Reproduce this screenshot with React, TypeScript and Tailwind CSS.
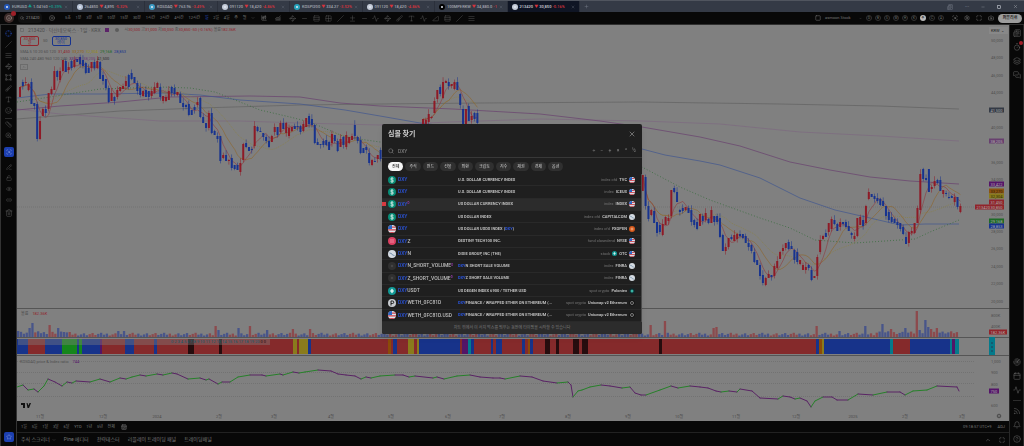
import { Fragment } from 'react';
import {
  AlignJustify, Bell, Brush, Calendar, Camera, ChartCandlestick, ChevronDown, ChevronUp, CirclePlus,
  CircleHelp, Crosshair, Diff, Layers, Link2, LockOpen, Maximize, MessagesSquare, Minus, Newspaper, PencilLine,
  Plus, Radar, Rss, Ruler, ScanSearch, Search, Settings, Slash, Smile, Square, Star, Timer, Trash2, Type,
  VectorSquare, Waypoints, X, ZoomIn, Eye, CalendarRange, ChartNoAxesCombined, TriangleRight, Rows3, Grid2x2, Activity,
} from 'lucide-react';

const RED = '#8e1a26';
const BLUE = '#17338f';
const STEP = 2.862;

const tabs = [
  { symbol: 'EURUSD', price: '1.04160', change: '+0.39%', up: true, color: 'bg-[#2457b8]' },
  { symbol: '264850', price: '4,895', change: '-5.32%', color: 'bg-[#b8c4d8]' },
  { symbol: 'KOSDAQ', price: '763.96', change: '-3.49%', color: 'bg-[#3d9bc4]' },
  { symbol: '091120', price: '18,420', change: '-4.86%', color: 'bg-[#c4cbd8]' },
  { symbol: 'KOSPI200', price: '334.27', change: '-3.52%', color: 'bg-[#27a3bd]' },
  { symbol: '091120', price: '18,420', change: '-4.86%', color: 'bg-[#c4cbd8]' },
  { symbol: '100MPERKW', price: '34,880.0', change: '-1', color: 'bg-black' },
  { symbol: '213420', price: '30,850', change: '-0.16%', color: 'bg-[#c4cbd8]', active: true },
];

const intervals = ['5초', '1분', '3분', '5분', '10분', '15분', '30분', '1시간', '2시간', '4시간', '12시간', '일', '2일', '4일', '주', '월'];

const drawTools = [Waypoints, Minus, Rows3, Grid2x2, Slash, Diff, Minus, Activity, Waypoints, Brush, Type, Activity, TriangleRight, Rows3, Slash, AlignJustify];

const chips = ['전체', '주식', '펀드', '선물', '외환', '크립토', '지수', '채권', '경제', '옵션'];

type Result = {
  symbol: string;
  name: string;
  kind: string;
  exchange: string;
  icon: string;
  flag: string;
  dot?: boolean;
};

const results: Result[] = [
  { symbol: 'DXY', name: 'U.S. DOLLAR CURRENCY INDEX', kind: 'index cfd', exchange: 'TVC', icon: 'dollar', flag: 'us' },
  { symbol: 'DXY', name: 'U.S. DOLLAR CURRENCY INDEX', kind: 'index', exchange: 'ICEUS', icon: 'dollar', flag: 'us' },
  { symbol: 'DXY', name: 'US DOLLAR CURRENCY INDEX', kind: 'index', exchange: 'INDEX', icon: 'dollar', flag: 'us', dot: true },
  { symbol: 'DXY', name: 'US DOLLAR INDEX', kind: 'index cfd', exchange: 'CAPITALCOM', icon: 'dollar', flag: 'white' },
  { symbol: 'DXY', name: 'US DOLLAR USDX INDEX (DXY)', kind: 'index cfd', exchange: 'FXOPEN', icon: 'us', flag: 'orange' },
  { symbol: 'DXYZ', name: 'DESTINY TECH100 INC.', kind: 'fund closedend', exchange: 'NYSE', icon: 'pink', flag: 'us' },
  { symbol: 'DXYN', name: 'DIXIE GROUP, INC (THE)', kind: 'stock', exchange: 'OTC', icon: 'white', flag: 'us' },
  { symbol: 'DXYN_SHORT_VOLUME', name: 'DXYN SHORT SALE VOLUME', kind: 'index', exchange: 'FINRA', icon: 'dark', flag: 'white', dot: true },
  { symbol: 'DXYZ_SHORT_VOLUME', name: 'DXYZ SHORT SALE VOLUME', kind: 'index', exchange: 'FINRA', icon: 'dark', flag: 'white', dot: true },
  { symbol: 'DXYUSDT', name: 'US DEGEN INDEX 6900 / TETHER USD', kind: 'spot crypto', exchange: 'Poloniex', icon: 'tether', flag: 'poloniex' },
  { symbol: 'DXYWETH_0FC81D', name: 'DXYFINANCE / WRAPPED ETHER ON ETHEREUM (...', kind: 'spot crypto', exchange: 'Uniswap v2 Ethereum', icon: 'letter', flag: 'uniswap' },
  { symbol: 'DXYWETH_0FC81D.USD', name: 'DXYFINANCE / WRAPPED ETHER ON ETHEREUM (...', kind: 'spot crypto', exchange: 'Uniswap v2 Ethereum', icon: 'us', flag: 'uniswap' },
];

// r = rising, b = falling, then body top-bottom
const candleGroups = [
  {
    x: 20,
    data: 'r87-97 b82-86 r82-83 r84-90 b82-104 b103-106 b104-139 r121-139 r109-116 b109-113 r93-109 r89-94 r71-90 b71-77 r71-80 r60-71 b61-72 r67-70 b61-68 r60-67 b59-62 b57-64 b60-66 b63-73 b68-73 r62-68 b62-68 r61-68 b62-79 b75-81 b79-88 b88-102 r93-101 b97-101 r90-97 r87-91 r86-89 r81-86 b75-87 b73-79 b77-83 b83-91 b88-95 r91-96 b90-97 b91-97 r91-96 r87-93 r83-88 b87-97 r96-101 r97-101 r91-100 b87-93 b88-94 r92-95 b94-103 b103-107 b105-107 b104-115 b110-115 b107-110 r102-105 b98-117 b117-123 b123-128 r113-128 b113-133 b131-135 b136-139 b136-161 r155-158 b155-161 r160-161 b158-168 b165-169 b165-170 r163-172 r144-160 b143-147 b147-151 b149-150 r126-146 b127-131 b131-132 b133-137 b137-141 b141-147 r136-142 r127-132 b127-135 r123-132 b123-129 r123-133 r128-136 r127-131 b126-129 b126-127 b126-132 r124-131 r118-127 b116-124 b119-125 b125-143 b142-145 b144-145 b141-145 b140-145 b142-150 r134-143 b135-141 b141-151 r139-147 b137-145 r135-147 r137-143 r136-140 b125-136 b137-141 b140-153 b148-153 b147-150 b153-163 r160-165 b161-162 r155-159 b150-159',
  },
  {
    x: 423,
    data: 'r119-124 r120-124 r114-122 r117-118 r101-113 r90-99 b87-94 r82-98 r81-83 b82-86 r84-86 r82-89 b82-90 b94-105 b109-124 r109-124 b106-121 r116-120 b113-119 b113-123',
  },
  {
    x: 642.7,
    data: 'r175-191 b177-206 b206-219 r210-215 b211-223 b222-233 b225-232 r224-235 r217-225 r218-221 r190-216 b188-192 b192-202 b210-212 b208-211 r207-210 b208-213 b210-222 b220-225 b222-229 r214-226 b216-221 r213-220 b219-223 r210-223 b216-222 b216-222 b218-237 b235-251 r247-251 r238-247 b237-239 r235-241 r234-239 b234-236 b234-238 b236-243 b243-247 b245-251 b252-262 b260-265 b265-276 b275-283 r278-285 r274-278 b275-277 r266-276 r261-268 r252-259 r248-251 r243-248 b242-249 b246-249 b250-260 b252-262 r260-264 r265-270 r267-270 b265-268 b270-280 r276-278 r257-276 r240-252 r236-239 b233-237 r223-232 r219-229 b220-224 b224-231 r222-227 b222-224 b222-227 b226-231 b233-235 r236-239 r218-236 r217-225 b220-226 r206-223 r192-199 b194-197 b196-199 b198-201 b199-205 b201-206 b206-216 b212-220 b217-222 b219-223 b222-225 b223-229 b227-234 b237-244 r232-243 r231-233 r223-233 r208-223 r174-210 b169-179 b178-180 b169-192 r187-189 r181-186 b180-183 b180-191 r190-194 b193-194 b197-198 b196-198 r197-202 b197-207 r206-212',
  },
].map(group =>
  group.data.split(' ').map((token, i) => {
    const [top, bottom] = token.slice(1).split('-').map(Number);
    const up = token[0] === 'r';
    return {
      x: group.x + i * STEP,
      top,
      bottom,
      up,
      close: up ? top : bottom,
      high: top - ((i * 7) % 5) * 1.2,
      low: bottom + ((i * 11) % 4) * 1.2,
    };
  }),
);

function average(group: (typeof candleGroups)[number], size: number) {
  return group
    .map((c, i) => {
      const part = group.slice(Math.max(0, i - size + 1), i + 1);
      const mean = part.reduce((sum, p) => sum + p.close, 0) / part.length;
      return `${c.x.toFixed(1)},${mean.toFixed(1)}`;
    })
    .join(' ');
}

const slowLines = [
  { color: '#626262', points: '17,119 120,111 200,108 300,105 380,104 480,103 640,102 780,104 880,106 959,109' },
  { color: '#7d6880', points: '17,109 60,114 160,121 240,121 300,123 380,125 450,122 540,119 642,121 720,124 800,132 880,136 959,141' },
  { color: '#68406f', points: '17,110 60,106 120,102 170,97 250,96 300,97 340,103 380,106 453,109 540,114 600,121 642,127 700,137 740,146 790,162 830,170 870,177 910,181 959,184' },
  { color: '#40568f', points: '17,98 50,94 100,94 165,93 200,95 240,100 300,104 345,110 380,116 420,123 520,135 642,149 665,155 700,161 720,165 760,178 800,198 835,210 870,218 900,225 925,224 959,224' },
  { color: '#2f6a35', dash: '1 2', points: '17,102 50,97 100,89 160,87 190,88 215,92 240,102 260,110 290,117 310,122 345,137 380,142 460,144 560,150 642,167 680,187 710,200 760,218 790,228 815,240 855,243 900,240 915,239 930,232 959,220' },
];

const volumeSpikes: Record<number, number> = {
  1: 6, 5: 9, 6: 14, 12: 12, 15: 9, 17: 5, 19: 5, 38: 6, 36: 6, 70: 11, 71: 7, 78: 9, 82: 11, 88: 7, 97: 8, 103: 8, 218: 10,
  222: 12, 227: 16, 244: 9, 245: 10, 280: 11, 288: 6, 297: 11, 303: 13, 306: 8, 311: 9, 315: 26, 316: 7, 318: 17, 319: 10, 320: 8, 322: 9,
};

const volumeBars = Array.from({ length: 330 }, (_, i) => ({
  x: 17 + (i - 1) * STEP,
  height: volumeSpikes[i] ?? 1.5 + ((i * 37) % 11) * 0.27 + (i > 300 || i < 20 ? 1.5 : 0),
  up: ((i * 13) % 7 < 3 && i !== 5 && i !== 6) || i === 12 || i === 227 || i === 315,
})).slice(1);

const stripColors: Record<string, string> = {
  b: '#17338a', r: '#852a2b', g: '#16861c', p: '#521567', k: '#260d0e', y: '#8a7b1c', o: '#8b4b08', c: '#047a8b',
};

// colour code followed by the right edge of the segment
const strip = 'b28 r45 b62 g77 b79 g82 b100 p102 r125 b134 r154 b157 r188 k194 r219 k222 r293 y297 r299 y308 b311 r388 o391 r393 b397 r408 y414 r417 y419 b460 r462 p468 c471 b474 r491 b493 r496 b502 r522 b525 r528 o530 b533 r545 k550 r556 k559 r573 k579 r582 k588 r659 k662 r816 b819 o822 y824 b890 c893 r910 b950 c952 p955 c959'
  .split(' ')
  .map((s, i, all) => {
    const start = i ? Number(all[i - 1].slice(1)) : 17;
    return { x: start, width: Number(s.slice(1)) - start, color: stripColors[s[0]] };
  });

const ratio = '17,387 23,385 28,390 34,389 38,392 44,386 48,379 55,382 62,386 67,382 72,383 76,381 90,382 100,379 110,382 120,378 126,379 132,377 140,375 146,376 157,374 163,375 172,373 177,374 188,379 200,378 206,380 209,379 218,384 222,382 230,382 238,377 250,375 262,375 266,376 280,374 283,375 293,372 299,373 305,372 318,370 331,371 338,374 346,375 355,376 361,379 366,377 371,378 380,376 395,375 403,375 409,377 415,376 433,378 437,377 444,379 457,376 470,375 480,377 493,378 500,378 505,379 520,376 532,377 543,381 557,383 568,382 571,385 573,397 578,391 582,390 590,387 601,385 610,386 622,388 630,387 635,393 641,395 646,395 660,390 671,386 678,388 690,386 700,387 708,388 716,391 721,392 729,391 737,392 740,389 752,391 760,398 778,399 783,396 790,397 795,399 800,398 807,401 811,407 815,401 823,397 832,397 837,400 848,400 858,394 873,395 887,392 900,392 905,395 913,391 927,390 937,386 957,387 959,391'
  .split(' ')
  .map(p => p.split(',').map(Number));

const months: [number, string][] = [
  [40, '11월'], [103, '12월'], [157, '2024'], [219, '2월'], [274, '3월'], [331, '4월'], [391, '5월'], [448, '6월'], [502, '7월'],
  [568, '8월'], [628, '9월'], [679, '10월'], [736, '11월'], [796, '12월'], [853, '2025'], [905, '2월'], [962, '3월'],
];

const axisLabels: [number, string][] = [
  [40, '50,000'], [57, '48,000'], [75, '46,000'], [92, '44,000'], [127, '40,000'], [162, '36,000'], [179, '34,000'], [214, '30,000'],
  [231, '28,000'], [248, '26,000'], [266, '24,000'], [283, '22,000'], [301, '20,000'], [315, '800K'], [326, '400K'],
  [361, '1,000'], [372, '900'], [384, '800'], [405, '600'],
];

const axisTags: { y: number; text: string; color: string; ink?: string; x?: number; width?: number }[] = [
  { y: 110, text: '41,500', color: '#343a45' },
  { y: 141, text: '38,205', color: '#68406f' },
  { y: 184, text: '33,422', color: '#551469' },
  { y: 191, text: '33,270', color: '#8b5210', ink: '#2b1c08' },
  { y: 196, text: '32,304', color: '#8a7b1c', ink: '#2f2c08' },
  { y: 202, text: '31,450', color: '#91242b' },
  { y: 207, text: '30,850', color: '#91242b' },
  { y: 207, text: '213420', color: '#91242b', x: 975, width: 14 },
  { y: 221, text: '29,168', color: '#1f6a27' },
  { y: 226, text: '28,853', color: '#17338f' },
  { y: 332, text: '182.36K', color: '#91242b', width: 18 },
  { y: 391, text: '750', color: '#551469', width: 10 },
];

function TopTabs() {
  return (
    <header className="flex h-3 shrink-0 items-stretch border-t border-[#50555f] bg-[#343a46] text-[#a5a9b2]">
      <nav className="flex w-[580px]">
        {tabs.map((tab, i) => (
          <div key={i} className={`flex flex-1 items-center border-r border-[#2b303b] pr-1 pl-1 ${tab.active ? 'bg-[#0f1524] text-[#cfd2d8]' : ''}`}>
            <span className={`mr-px flex h-1.5 w-1.5 shrink-0 items-center justify-center rounded-full ${tab.color}`}>
              <span className="h-0.5 w-0.5 rounded-full bg-[#e3e8f0]" />
            </span>
            <a href="#" className="flex items-center gap-px pl-px font-medium whitespace-nowrap">
              <span>{tab.symbol}</span>
              <span className={tab.up ? 'text-[#149c8c]' : 'text-[#d8333c]'}>{tab.up ? '▲' : '▼'}</span>
              <span>{tab.price}</span>
              <span className={tab.up ? 'text-[#149c8c]' : 'text-[#d8333c]'}>{tab.change}</span>
            </a>
            <button aria-label="탭 닫기" className="ml-auto"><X size={4} className="text-[#6c727e]" /></button>
          </div>
        ))}
      </nav>
      <button className="px-1" aria-label="새 탭"><Plus size={5} className="text-[#767c87]" /></button>
      <div className="ml-auto flex items-center gap-3 pr-1.5">
        <Newspaper size={6} className="text-[#6c727e]" />
        <span className="text-[#6c727e]">•••</span>
        <Minus size={4} />
        <Square size={4} strokeWidth={5} />
        <X size={5} />
      </div>
    </header>
  );
}

function Toolbar() {
  return (
    <div className="flex h-[13px] shrink-0 items-center border-b border-[#303030] bg-[#080808] text-[#777]">
      <div className="relative ml-1 flex h-2.5 w-2.5 items-center justify-center rounded-full bg-[#3b2a28]">
        <Smile size={6} className="text-[#b0a09b]" />
        <span className="absolute -top-0.5 -right-0.5 h-[5px] w-[5px] rounded-full bg-[#9e2029]" />
      </div>
      <button className="ml-1 flex h-[10px] w-[24px] items-center gap-0.5 rounded-sm bg-[#111] pl-0.5 text-[#8d8d8d]">
        <Search size={4} /> 213420
      </button>
      <CirclePlus size={6} className="mr-2 ml-[7px]" />
      <div className="ml-0.5 flex w-[190px] items-center justify-between">
        {intervals.map(item => (
          <button key={item} className={`whitespace-nowrap ${item === '일' ? 'text-[#2a53d0]' : ''}`}>{item}</button>
        ))}
        <ChevronDown size={4} />
      </div>
      <ChartCandlestick size={6} className="ml-1.5" />
      <ChartNoAxesCombined size={6} className="ml-2" />
      <div className="ml-2 flex w-[186px] items-center justify-between text-[#5c5c5c]">
        {drawTools.map((Icon, i) => <Icon key={i} size={7} strokeWidth={1.5} />)}
      </div>
      <div className="ml-auto flex items-center">
        <Square size={6} />
        <span className="ml-1 w-[34px] whitespace-nowrap">asmoon Stock</span>
        <ChevronDown size={3} />
        <div className="ml-1 flex gap-[3px]">
          {['D', 'B', 'S', 'M', 'H', 'K', '주', 'C', 'A'].map(item => (
            <span
              key={item}
              className={`flex h-1.5 w-1.5 items-center justify-center rounded-full text-[3px] ${item === '주' ? 'bg-[#b9b9b9] text-black' : 'border border-[#333]'}`}
            >
              {item}
            </span>
          ))}
        </div>
        <div className="mr-1 ml-2 flex gap-1.5">
          <ScanSearch size={6} />
          <Settings size={6} />
          <Maximize size={6} />
          <Camera size={6} />
        </div>
        <button className="mr-0.5 h-[9px] w-[24px] rounded-full bg-[#9d9d9d] text-[4px] font-bold whitespace-nowrap text-[#222]">퍼블리쉬</button>
      </div>
    </div>
  );
}

function LeftBar() {
  const slot = 'flex h-[11px] items-center justify-center';
  return (
    <aside className="flex w-[17px] shrink-0 flex-col border-r border-l border-[#333] bg-[#080808] px-0.5 pt-[3px] text-[#626262]">
      <div className={`${slot} text-[#20419f]`}><Crosshair size={7} strokeWidth={1.5} /></div>
      {[Slash, AlignJustify, Waypoints, VectorSquare, Brush, Type, Smile].map((Icon, i) => (
        <div key={i} className={slot}><Icon size={7} strokeWidth={1.5} /></div>
      ))}
      <div className="mx-0.5 mt-0.5 border-t border-[#2c2c2c]" />
      {[Ruler, ZoomIn].map((Icon, i) => (
        <div key={i} className={slot}><Icon size={7} strokeWidth={1.5} /></div>
      ))}
      <button aria-label="자석" className="mx-auto mt-1.5 mb-1 flex h-[10px] w-[10px] items-center justify-center rounded-xs bg-[#1c3fb0] text-[#7f95d8]">
        <ScanSearch size={6} />
      </button>
      {[PencilLine, LockOpen, Eye, Link2].map((Icon, i) => (
        <div key={i} className={slot}><Icon size={6} strokeWidth={1.5} /></div>
      ))}
      <div className="mt-1 flex justify-center"><Trash2 size={8} strokeWidth={1.5} /></div>
      <button aria-label="즐겨찾기" className="mx-auto mt-auto mb-1 flex h-[10px] w-[10px] items-center justify-center rounded-xs bg-[#1c3fb0] text-[#7f95d8]">
        <Star size={6} />
      </button>
    </aside>
  );
}

function RightBar() {
  return (
    <aside className="flex w-[15px] shrink-0 flex-col items-center border-r border-l border-[#282828] bg-[#080808] pt-1 pb-[3px] text-[#6c6c6c]">
      <div className="flex flex-col gap-1.5">
        <Newspaper size={8} strokeWidth={1.5} />
        <div className="relative">
          <Timer size={8} strokeWidth={1.5} />
          <span className="absolute -top-0.5 -right-0.5 h-1 w-1 rounded-full bg-[#a3202a]" />
        </div>
        <Layers size={8} strokeWidth={1.5} />
        <MessagesSquare size={8} strokeWidth={1.5} />
      </div>
      <div className="mt-auto flex flex-col gap-1.5">
        <Radar size={8} strokeWidth={1.5} />
        <Calendar size={8} strokeWidth={1.5} />
        <Activity size={8} strokeWidth={1.5} />
        <div className="border-t border-[#2c2c2c]" />
        <Rss size={8} strokeWidth={1.5} />
        <Bell size={8} strokeWidth={1.5} />
        <CircleHelp size={8} strokeWidth={1.5} />
      </div>
    </aside>
  );
}

function Plot() {
  return (
    <svg viewBox="17 25 957 396" preserveAspectRatio="none" className="h-full min-w-0 flex-1">
      <line x1="17" x2="974" y1="207" y2="207" stroke="#737373" strokeDasharray="1 1" />
      {slowLines.map(line => (
        <polyline key={line.color} points={line.points} fill="none" stroke={line.color} strokeWidth="0.7" strokeDasharray={line.dash} />
      ))}
      {candleGroups.map((group, i) => (
        <g key={i} fill="none" strokeWidth="0.6">
          <polyline points={average(group, 20)} stroke="#8b7f3c" strokeDasharray="1 1" />
          <polyline points={average(group, 10)} stroke="#8f6428" />
          <polyline points={average(group, 5)} stroke="#8f3a40" />
          {group.map(c => (
            <g key={c.x} fill={c.up ? RED : BLUE}>
              <rect x={c.x - 0.25} y={c.high} width="0.5" height={c.low - c.high} />
              <rect x={c.x - 1} y={c.top} width="2" height={c.bottom - c.top} />
            </g>
          ))}
        </g>
      ))}

      {/* volume */}
      {volumeBars.map(bar => (
        <rect key={bar.x} x={bar.x} y={337 - bar.height} width="2.3" height={bar.height} fill={bar.up ? '#8c4a4d' : '#48558a'} />
      ))}

      {/* signal strip */}
      {strip.map(s => <rect key={s.x} x={s.x} y="339" width={s.width} height="15" fill={s.color} />)}

      {/* ratio */}
      {[361.5, 372.5, 383.5, 396.5].map(y => (
        <line key={y} x1="17" x2="974" y1={y} y2={y} stroke="#6b6b6b" strokeDasharray="1 1" strokeWidth="0.7" />
      ))}
      {ratio.slice(1).map(([x, y], i) => {
        const [px, py] = ratio[i];
        return <line key={x} x1={px} y1={py} x2={x} y2={y} strokeWidth="1" strokeLinecap="round" stroke={y < py ? '#27802a' : '#5a2465'} />;
      })}

      {[308.5, 337.5, 355.5].map(y => <line key={y} x1="17" x2="974" y1={y} y2={y} stroke="#555" />)}
      {months.map(([x, text]) => (
        <text key={x} x={x} y="417.5" fontSize="4" textAnchor="middle" fill="#4a4a4a">{text}</text>
      ))}
      <path d="M21 403h4v5h-2v-3h-2zM26.500 403h1l1 2.500 1-2.500h1.500l-2 5h-1.500z" fill="#111" />
    </svg>
  );
}

function PriceAxis() {
  return (
    <svg viewBox="974 25 35 396" preserveAspectRatio="none" className="h-full w-[35px] shrink-0" fontSize="4">
      <rect x="989" y="27" width="19" height="7" fill="#888" />
      <text x="991" y="32" fill="#222">KRW ⌄</text>
      {axisLabels.map(([y, text]) => <text key={y} x="991" y={y + 1.5} fill="#505050">{text}</text>)}
      {axisTags.map(tag => (
        <g key={tag.text}>
          <rect x={tag.x ?? 989} y={tag.y - 2.5} width={tag.width ?? 15} height="5" fill={tag.color} />
          <text x={(tag.x ?? 989) + 1.5} y={tag.y + 1.5} fontSize="4" fill={tag.ink ?? '#aaa'}>{tag.text}</text>
        </g>
      ))}
      {[308.5, 337.5, 355.5].map(y => <line key={y} x1="974" x2="1009" y1={y} y2={y} stroke="#555" />)}
      <rect x="989" y="337" width="6" height="18" fill="#047a8b" />
      {[342, 346, 350].map(y => <rect key={y} x="991" y={y} width="2" height="2" fill="#145a70" />)}
      <circle cx="999" cy="416" r="1.800" fill="none" stroke="#333" strokeWidth="0.700" />
      <circle cx="999" cy="416" r="0.600" fill="#333" />
    </svg>
  );
}

function Legend() {
  return (
    <div className="absolute top-0.5 left-[3px] flex flex-col whitespace-nowrap text-[#4d4d4d]">
      <div className="flex h-1.5 items-center gap-1">
        <Square size={4} />
        <span className="text-[5px]">213420 · 덕산네오룩스 · 1일 · KRX</span>
        <span className="h-1 w-1 bg-[#5c2369]" />
        <span className="mx-0.5 h-1 w-1 rounded-full bg-[#5c5c5c]" />
        <span>
          시<b className="font-normal text-[#91242b]">30,500</b> 고<b className="font-normal text-[#91242b]">31,000</b> 저
          <b className="font-normal text-[#91242b]">30,050</b> 종<b className="font-normal text-[#91242b]">30,850 -50 (-0.16%)</b> 볼륨
          <b className="font-normal text-[#91242b]">182.36K</b>
        </span>
      </div>
      <div className="mt-[3px] flex items-center gap-1">
        <button className="h-[10px] w-[19px] rounded-xs border border-[#91242b] leading-[4px] text-[#91242b]">30,800<br />셀</button>
        <span>50</span>
        <button className="h-[10px] w-[19px] rounded-xs border border-[#17338f] leading-[4px] text-[#17338f]">30,850<br />바이</button>
      </div>
      <div className="mt-[3px] flex h-1.5 items-center gap-0.5">
        <span>SMA 5 10 20 60 120</span>
        <span className="text-[#91242b]">31,450</span>
        <span className="text-[#96600f]">33,270</span>
        <span className="text-[#9a8c1c]">32,304</span>
        <span className="text-[#1f6a27]">29,168</span>
        <span className="text-[#17338f]">28,853</span>
      </div>
      <div className="mt-px flex h-1.5 items-center gap-0.5">
        <span>SMA 240 480 960 120 240</span>
        <span className="text-[#551469]">33,422</span>
        <span className="text-[#6d3c78]">38,205</span>
        <span className="text-[#2e2e2e]">41,500</span>
      </div>
      <button aria-label="접기" className="mt-0.5 flex h-1.5 w-2 items-center justify-center border border-[#6c6c6c]"><ChevronUp size={4} /></button>
    </div>
  );
}

function Chart() {
  return (
    <main className="relative flex min-h-0 flex-1 bg-[#808080]">
      <Plot />
      <PriceAxis />
      <Legend />
      <div className="absolute top-[72%] left-1 mt-0.5 flex gap-1 text-[#4d4d4d]">
        볼륨 <span className="text-[#91242b]">182.36K</span>
      </div>
      <div className="absolute top-[79%] left-px mt-px h-[6px] w-[252px] bg-[#808080]/40 pr-1 text-right leading-[6px] whitespace-nowrap text-[#0b5f74]">
        0 2 3 4 5 6 7 8 9 10 11 12 13 14 15 16 17 18 19 20 <span className="text-[#260d0e]">0 0</span>
      </div>
      <div className="absolute top-[84%] left-[3px] mt-0.5 flex gap-1 bg-[#808080] text-[#4d4d4d]">
        KOSDAQ price &amp; Index ratio <span className="text-[#551469]">744</span>
      </div>
    </main>
  );
}

function BottomBars() {
  return (
    <footer className="shrink-0 bg-[#080808] text-[#777]">
      <div className="flex h-3 items-center border-b border-[#222] px-1">
        <div className="flex w-[94px] justify-between whitespace-nowrap">
          {['1일', '5일', '1달', '3달', '6달', 'YTD', '1년', '5년', '전체'].map(item => <button key={item}>{item}</button>)}
        </div>
        <CalendarRange size={6} className="ml-1.5" />
        <span className="ml-auto">09:18:57 UTC+9</span>
        <span className="ml-1.5">ADJ</span>
      </div>
      <div className="flex h-[13px] items-center gap-2 px-1 text-[5px] whitespace-nowrap">
        <button className="flex items-center gap-0.5">주식 스크리너 <ChevronDown size={4} /></button>
        <button>Pine 에디터</button>
        <button>전략테스터</button>
        <button>리플레이 트레이딩 패널</button>
        <button>트레이딩패널</button>
        <ChevronUp size={6} className="ml-auto" />
        <Maximize size={6} />
      </div>
    </footer>
  );
}

function Badge({ kind }: { kind: string }) {
  if (kind === 'us') {
    return (
      <svg viewBox="0 0 16 16" className="h-full w-full overflow-hidden rounded-full">
        <rect width="16" height="16" fill="#dfe5ee" />
        <path d="M0 4h16M0 9.500h16M0 15h16" stroke="#c9434e" strokeWidth="2.500" />
        <rect width="8" height="8" fill="#2b68c6" />
      </svg>
    );
  }
  const fills: Record<string, string> = {
    dollar: '#078d77', orange: '#d6581b', pink: '#db3f61', white: '#d5dbe2', dark: '#303030', tether: '#109793', letter: '#c8cbcf', poloniex: '#10272a', uniswap: '#171717',
  };
  return (
    <svg viewBox="0 0 16 16" className="h-full w-full">
      <circle cx="8" cy="8" r="8" fill={fills[kind]} />
      {kind === 'dollar' && <path d="M11 5.500C10 3.500 5 3.800 5.200 6.200 5.400 8.500 11 7.500 11 10 11 12.500 6 12.500 5 10.500M8 2.500v11" stroke="#e8f3ef" strokeWidth="1.600" fill="none" />}
      {kind === 'tether' && <path d="M8 3l4 5-4 5-4-5z" fill="#d5efec" />}
      {kind === 'letter' && <path d="M6 13V4h3a2.500 2.500 0 0 1 0 5H6" stroke="#222" strokeWidth="2" fill="none" />}
      {kind === 'white' && <path d="M3 6l4 1 2 3 4 1" stroke="#5b7c9c" strokeWidth="1.500" fill="none" />}
      {kind === 'pink' && <path d="M4 6h8M4 10h8" stroke="#f39fb2" strokeWidth="1.500" />}
      {kind === 'orange' && <path d="M4 8h8M8 4v8" stroke="#f7c29c" strokeWidth="2" />}
      {kind === 'poloniex' && <circle cx="8" cy="8" r="4" fill="#38b4a3" />}
      {kind === 'uniswap' && <circle cx="8" cy="8" r="4" fill="none" stroke="#9c9c9c" strokeWidth="2" />}
      {kind === 'dark' && <circle cx="8" cy="8" r="2.500" fill="#464646" />}
    </svg>
  );
}

function Highlight({ text }: { text: string }) {
  return (
    <>
      {text.split('DXY').map((part, i) => (
        <Fragment key={i}>
          {i > 0 && <span className="text-[#2a55e0]">DXY</span>}
          {part}
        </Fragment>
      ))}
    </>
  );
}

function SymbolSearch() {
  return (
    <div className="fixed inset-0 flex items-center justify-center pt-3">
      <section role="dialog" aria-labelledby="search-title" className="flex w-[260px] flex-col overflow-hidden rounded-xs bg-[#1f1f1f] text-[#bdbdbd] shadow-md">
        <div className="flex h-5 items-center justify-between px-1.5">
          <h2 id="search-title" className="text-[7px] font-bold text-[#d0d0d0]">심볼 찾기</h2>
          <button aria-label="닫기"><X size={8} strokeWidth={1.5} /></button>
        </div>
        <div className="flex h-[14px] items-center gap-1 border-b border-[#383838] px-1.5 text-[#8c8c8c]">
          <Search size={6} />
          <input aria-label="심볼" defaultValue="DXY" className="min-w-0 flex-1 bg-transparent text-[5px] outline-none" />
          <div className="flex gap-1 text-[5px]">
            {['÷', '−', '+', '×', '^', '½'].map(op => <button key={op} className="w-1">{op}</button>)}
          </div>
        </div>
        <div className="flex h-4 items-center gap-0.5 px-1.5">
          {chips.map((chip, i) => (
            <button key={chip} className={`h-[9px] rounded-full px-1 leading-[9px] font-medium whitespace-nowrap ${i === 0 ? 'bg-[#f5f5f5] text-[#222]' : 'bg-[#303030]'}`}>
              {chip}
            </button>
          ))}
        </div>
        <ul className="grid h-[148px] auto-rows-fr border-r border-[#4a4a4a]">
          {results.map((row, i) => (
            <li key={i} className={`flex items-center border-b border-[#292929] pr-1.5 ${i === 2 ? 'bg-[#2c2c2c]' : ''}`}>
              <span className={`h-1 w-1 ${i === 2 ? 'bg-[#d83a40]' : ''}`} />
              <span className="ml-0.5 h-2 w-2 shrink-0"><Badge kind={row.icon} /></span>
              <a href="#" className="ml-0.5 w-[60px] shrink-0 text-[5px] font-medium whitespace-nowrap">
                <Highlight text={row.symbol} />
                {row.dot && <sup className="text-[3px] text-[#a03bb5]">D</sup>}
              </a>
              <span className="min-w-0 flex-1 font-bold whitespace-nowrap">
                <Highlight text={row.name} />
              </span>
              <span className="mr-0.5 shrink-0 text-[#747474]">{row.kind}</span>
              {row.exchange === 'OTC' && <span className="mr-0.5 h-[5px] w-[5px]"><Badge kind="tether" /></span>}
              <span className="shrink-0 font-bold">{row.exchange}</span>
              <span className="ml-0.5 h-1.5 w-1.5 shrink-0"><Badge kind={row.flag} /></span>
            </li>
          ))}
        </ul>
        <p className="h-3 bg-[#2c2c2c] text-center leading-3 text-[#7d7d7d]">차트 위에서 이 서치 박스를 띄우는 동안에 타이핑을 시작할 수 있습니다</p>
      </section>
    </div>
  );
}

export default function App() {
  return (
    <div className="flex h-screen flex-col overflow-hidden bg-[#080808] font-['Roboto','Noto_Sans_CJK_KR',sans-serif] text-[4px] leading-none">
      <TopTabs />
      <Toolbar />
      <div className="flex min-h-0 flex-1">
        <LeftBar />
        <div className="flex min-w-0 flex-1 flex-col">
          <Chart />
          <BottomBars />
        </div>
        <RightBar />
      </div>
      <SymbolSearch />
    </div>
  );
}
